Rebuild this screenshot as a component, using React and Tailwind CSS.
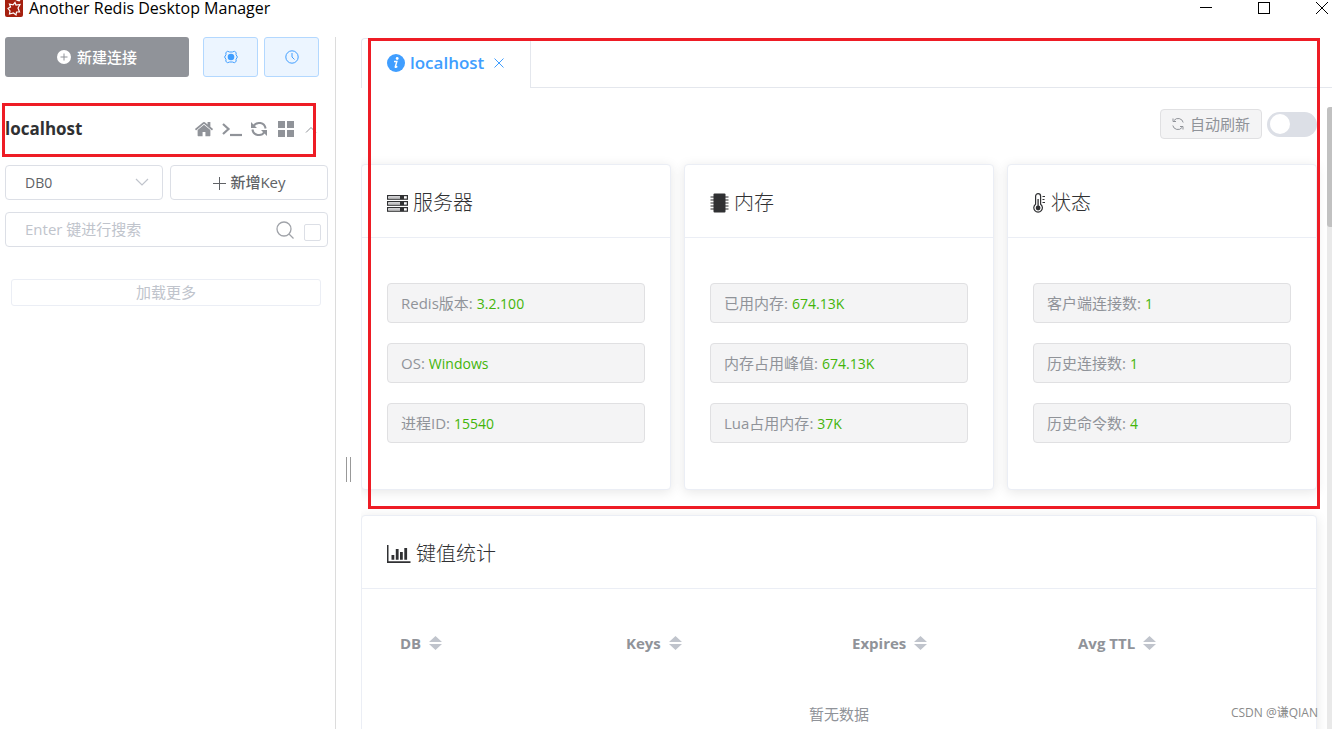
import React, { useState } from 'react';

const cards = [
  {
    title: '服务器',
    icon: ServerIcon,
    items: [
      ['Redis版本', '3.2.100'],
      ['OS', 'Windows'],
      ['进程ID', '15540'],
    ],
  },
  {
    title: '内存',
    icon: ChipIcon,
    items: [
      ['已用内存', '674.13K'],
      ['内存占用峰值', '674.13K'],
      ['Lua占用内存', '37K'],
    ],
  },
  {
    title: '状态',
    icon: ThermometerIcon,
    items: [
      ['客户端连接数', '1'],
      ['历史连接数', '1'],
      ['历史命令数', '4'],
    ],
  },
];

const columns = ['DB', 'Keys', 'Expires', 'Avg TTL'];

function LogoIcon() {
  return (
    <svg width="18" height="17" viewBox="0 0 18 17" aria-hidden="true">
      <path d="M0 0h18v15a2 2 0 0 1-2 2H2a2 2 0 0 1-2-2z" fill="#a5200f" />
      <path
        d="M4.500 4 8 4.800 10 2.500 11 5 15 4.500 13 8 14.500 12 11.500 12 11 15 8.500 13 4.500 14 5 11 3 8.500 5.500 7z"
        fill="none"
        stroke="#fff"
        strokeWidth="1.200"
      />
      <path d="M10.500 0h5l-1 1.500-2-.5z" fill="#fff" />
    </svg>
  );
}

function HomeIcon() {
  return (
    <svg width="18" height="16" viewBox="20 240 1624 1300" fill="currentColor" aria-hidden="true">
      <path d="M1408 992v480q0 26-19 45t-45 19H960v-384H704v384H320q-26 0-45-19t-19-45V992q0-1 .5-3t.5-3l575-474 575 474q1 2 1 6zm223-69l-62 74q-8 9-21 11h-3q-13 0-21-7L832 424l-692 577q-12 8-24 7-13-2-21-11l-62-74q-8-10-7-23.500T37 878l719-599q32-26 76-26t76 26l244 204V288q0-14 9-23t23-9h192q14 0 23 9t9 23v408l219 182q10 8 11 21.500t-7 23.500z" />
    </svg>
  );
}

function TerminalIcon() {
  return (
    <svg width="20" height="16" viewBox="0 0 20 16" fill="none" stroke="currentColor" strokeWidth="2.200" aria-hidden="true">
      <path d="M1 3l5.500 5L1 13" />
      <path d="M8 14h12" />
    </svg>
  );
}

function RefreshIcon() {
  return (
    <svg width="16" height="16" viewBox="0 0 16 16" fill="none" stroke="currentColor" strokeWidth="2" aria-hidden="true">
      <path d="M2.500 5A6.600 6.600 0 0 1 14.600 7.500M13.500 11A6.600 6.600 0 0 1 1.400 8.500" />
      <path d="M0 1v6h6zM16 15V9h-6z" fill="currentColor" stroke="none" />
    </svg>
  );
}

function GridIcon() {
  return (
    <svg width="16" height="16" viewBox="0 0 16 16" fill="currentColor" aria-hidden="true">
      <path d="M0 0h7v7H0zM9 0h7v7H9zM0 9h7v7H0zM9 9h7v7H9z" />
    </svg>
  );
}

function GearIcon() {
  return (
    <svg width="14" height="14" viewBox="0 0 14 14" fill="none" stroke="currentColor" strokeLinejoin="round" aria-hidden="true">
      <path d="M3.600 1.300 5.600 2h2.800l2-.7 1.800 1.300-.2 2L13.400 7 12 9.400l.2 2-1.800 1.300-2-.7H5.600l-2 .7-1.800-1.300.2-2L.6 7 2 4.600l-.2-2z" />
      <circle cx="7" cy="7" r="3.300" fill="currentColor" stroke="none" />
    </svg>
  );
}

function ClockIcon() {
  return (
    <svg width="14" height="14" viewBox="0 0 14 14" fill="none" stroke="currentColor" aria-hidden="true">
      <circle cx="7" cy="7" r="6.200" />
      <path d="M7 3v4l2.500 2.500" />
    </svg>
  );
}

function ServerIcon() {
  return (
    <svg width="21" height="17" viewBox="0 0 21 17" fill="currentColor" aria-hidden="true">
      {[0, 6, 12].map((y) => (
        <g key={y}>
          <rect x="0.600" y={y + 0.600} width="19.800" height="3.600" fill="#fff" stroke="currentColor" strokeWidth="1.200" />
          <rect x="2" y={y + 1.800} width="11" height="1.200" fill="#c4c4c6" />
          <rect x="13" y={y + 0.600} width="4" height="3.600" />
        </g>
      ))}
    </svg>
  );
}

function ChipIcon() {
  return (
    <svg width="19" height="20" viewBox="0 0 19 20" fill="currentColor" aria-hidden="true">
      <rect x="3.500" y="0.500" width="12" height="19" rx="1" />
      <path d="M.5 4h18M.5 7h18M.5 10h18M.5 13h18M.5 16h18" stroke="currentColor" strokeWidth="1.200" />
    </svg>
  );
}

function ThermometerIcon() {
  return (
    <svg width="13" height="20" viewBox="0 0 13 20" fill="none" stroke="currentColor" aria-hidden="true">
      <path d="M2.600 11.300V3.200a2.500 2.500 0 0 1 5 0v8.100a4.300 4.300 0 1 1-5 0z" strokeWidth="1.200" />
      <circle cx="5.100" cy="15" r="2.400" fill="currentColor" stroke="none" />
      <path d="M5.100 6v9" strokeWidth="1.300" />
      <path d="M9.500 3.500h2.500M9.500 6.500h2M9.500 9.500h2.500" />
    </svg>
  );
}

function ChartIcon() {
  return (
    <svg width="24" height="18" viewBox="0 0 24 18" fill="currentColor" aria-hidden="true">
      <path d="M0 0h1.500v16.300H23.500V18H0zM4.500 10h2.800v4.800H4.500zM8.800 4h2.800v10.800H8.800zM13 7h2.800v7.800H13zM17.300 3h2.800v11.800h-2.800z" />
    </svg>
  );
}

function TitleBar() {
  return (
    <header className="flex h-[17px] shrink-0 items-start pl-[5px] pr-1 text-black">
      <LogoIcon />
      <h1 className="ml-[6px] flex-1 whitespace-nowrap text-[16px] leading-4">Another Redis Desktop Manager</h1>
      <div className="flex gap-[46px]">
        <button type="button" aria-label="Minimize">
          <svg width="12" height="15" viewBox="0 0 12 15" stroke="currentColor">
            <path d="M0 7.500h12" />
          </svg>
        </button>
        <button type="button" aria-label="Maximize">
          <svg width="12" height="15" viewBox="0 0 12 15" fill="none" stroke="currentColor">
            <rect x="0.500" y="2.500" width="11" height="11" />
          </svg>
        </button>
        <button type="button" aria-label="Close">
          <svg width="12" height="15" viewBox="0 0 12 15" stroke="currentColor">
            <path d="M0 2l12 12M12 2L0 14" />
          </svg>
        </button>
      </div>
    </header>
  );
}

function Sidebar() {
  const [exact, setExact] = useState(false);

  return (
    <aside className="w-84 shrink-0 border-r border-[#dcdcdc] pl-[5px] pr-[7px]">
      <div className="flex pr-[9px]">
        <button
          type="button"
          className="flex h-10 flex-1 items-center justify-center gap-[6px] rounded-[3px] bg-[#909399] text-[15px] font-medium text-white"
        >
          <svg width="14" height="14" viewBox="0 0 14 14" aria-hidden="true">
            <circle cx="7" cy="7" r="7" fill="#fff" />
            <path d="M7 3.500v7M3.500 7h7" stroke="#909399" />
          </svg>
          新建连接
        </button>
        <button
          type="button"
          aria-label="设置"
          className="ml-[14px] flex h-10 w-[55px] items-center justify-center rounded-[3px] border border-[#b3d8ff] bg-[#ecf5ff] text-[#409eff]"
        >
          <GearIcon />
        </button>
        <button
          type="button"
          aria-label="日志"
          className="ml-[6px] flex h-10 w-[55px] items-center justify-center rounded-[3px] border border-[#b3d8ff] bg-[#ecf5ff] text-[#409eff]"
        >
          <ClockIcon />
        </button>
      </div>

      {/* Connection header */}
      <div className="relative mt-[26px] flex h-[51px] items-center pr-[11px] text-[#909399]">
        <h2 className="flex-1 text-[17px] font-bold text-[#303133]">localhost</h2>
        <div className="flex items-center gap-[9px]">
          <button type="button" aria-label="主页"><HomeIcon /></button>
          <button type="button" aria-label="命令行"><TerminalIcon /></button>
          <button type="button" aria-label="刷新"><RefreshIcon /></button>
          <button type="button" aria-label="菜单" className="mx-[2px]"><GridIcon /></button>
          <button type="button" aria-label="折叠">
            <svg width="12" height="12" viewBox="0 0 12 12" fill="none" stroke="currentColor" aria-hidden="true">
              <path d="M1 9.500l5-5 5 5" />
            </svg>
          </button>
        </div>
        <div className="pointer-events-none absolute -bottom-[3px] -left-[3px] right-3 top-0 border-3 border-[#ee1c25]" />
      </div>

      <div className="mt-[11px] grid grid-cols-2 gap-[7px] text-[15px] text-[#606266]">
        <div className="relative">
          <select
            aria-label="DB"
            className="h-[35px] w-full appearance-none rounded-[4px] border border-[#dcdfe6] bg-white px-[19px] text-[14px]"
          >
            <option>DB0</option>
          </select>
          <svg
            className="pointer-events-none absolute right-[14px] top-[10px] text-[#c0c4cc]"
            width="14"
            height="14"
            viewBox="0 0 14 14"
            fill="none"
            stroke="currentColor"
            strokeWidth="1.200"
            aria-hidden="true"
          >
            <path d="M1 4l6 6 6-6" />
          </svg>
        </div>
        <button
          type="button"
          className="flex h-[35px] items-center justify-center gap-1 rounded-[4px] border border-[#dcdfe6] text-[15px] font-medium"
        >
          <svg width="14" height="14" viewBox="0 0 14 14" stroke="currentColor" aria-hidden="true">
            <path d="M7.500 1v13M1 7.500h13" />
          </svg>
          新增Key
        </button>
      </div>

      <div className="mt-3 flex h-[35px] items-center rounded-[4px] border border-[#dcdfe6] pl-[19px] pr-[6px]">
        <input
          type="text"
          aria-label="搜索"
          placeholder="Enter 键进行搜索"
          className="min-w-0 flex-1 text-[15px] outline-none placeholder:text-[#c0c4cc]"
        />
        <svg className="text-[#a0a3a9]" width="18" height="18" viewBox="0 0 18 18" fill="none" stroke="currentColor" strokeWidth="1.300" aria-hidden="true">
          <circle cx="8" cy="8" r="7" />
          <path d="M13 13l4.500 4.500" />
        </svg>
        <input
          type="checkbox"
          aria-label="精确搜索"
          checked={exact}
          onChange={(e) => setExact(e.target.checked)}
          className="ml-[10px] mt-[5px] size-[17px] appearance-none rounded-[2px] border border-[#dcdfe6] bg-white checked:bg-[#409eff]"
        />
      </div>

      <div className="mt-8 pl-[6px] pr-[7px]">
        <button
          type="button"
          disabled
          className="h-[27px] w-full rounded-[3px] border border-[#ebeef5] text-[15px] leading-[25px] text-[#c0c4cc]"
        >
          加载更多
        </button>
      </div>
    </aside>
  );
}

function TabBar() {
  return (
    <nav className="mt-px flex h-[50px] shrink-0">
      <div className="flex w-[170px] items-center rounded-t-[4px] border-x border-t border-[#e4e7ed] pb-px pl-[25px] text-[#409eff]">
        <a href="#localhost" className="flex items-center gap-[5px] text-[17px] font-semibold leading-6">
          <svg width="18" height="18" viewBox="0 0 18 18" aria-hidden="true">
            <circle cx="9" cy="9" r="9" fill="currentColor" />
            <circle cx="10.200" cy="4.500" r="1.400" fill="#fff" />
            <path d="M7 7.600h2.800L8.300 12.800q-.2 1.200 2-.4" fill="none" stroke="#fff" strokeWidth="1.500" />
          </svg>
          localhost
        </a>
        <button type="button" aria-label="关闭" className="ml-[10px]">
          <svg width="10" height="10" viewBox="0 0 10 10" stroke="currentColor" aria-hidden="true">
            <path d="M.5.5l9 9M9.500.5l-9 9" />
          </svg>
        </button>
      </div>
      <div className="flex-1 border-b border-[#e4e7ed]" />
    </nav>
  );
}

function InfoCard({ title, icon: Icon, items }) {
  return (
    <section className="rounded-[4px] border border-[#ebeef5] bg-white shadow-[0_2px_12px_rgba(0,0,0,0.1)]">
      <h3 className="flex h-[73px] items-center gap-[5px] border-b border-[#ebeef5] px-[25px] pt-1 text-[20px] font-light text-[#303133]">
        <Icon />
        {title}
      </h3>
      <ul className="space-y-5 px-[25px] pb-[46px] pt-[45px]">
        {items.map(([label, value]) => (
          <li
            key={label}
            className="flex h-10 items-center gap-1 rounded-[4px] border border-[#e0e0e2] bg-[#f4f4f5] px-[13px] text-[15px] text-[#909399]"
          >
            {label}:
            <span className="text-[14px] text-[#43b50a]">{value}</span>
          </li>
        ))}
      </ul>
    </section>
  );
}

function KeyStats() {
  return (
    <section className="mt-[25px] rounded-[4px] border border-[#ebeef5] bg-white shadow-[0_2px_12px_rgba(0,0,0,0.1)]">
      <h3 className="flex h-[73px] items-center gap-[5px] border-b border-[#ebeef5] px-[25px] pt-1 text-[20px] font-light text-[#303133]">
        <ChartIcon />
        键值统计
      </h3>
      <div className="px-[25px] py-[25px]">
        <table className="w-full table-fixed text-[15px] text-[#909399]">
          <thead>
            <tr>
              {columns.map((name) => (
                <th key={name} className="h-[58px] px-[13px] text-left font-bold">
                  <button type="button" className="flex items-center gap-2">
                    {name}
                    <svg className="text-[#c0c4cc]" width="13" height="14" viewBox="0 0 13 14" fill="currentColor" aria-hidden="true">
                      <path d="M6.500 0l6.500 6H0zM6.500 14l6.500-6H0z" />
                    </svg>
                  </button>
                </th>
              ))}
            </tr>
          </thead>
          <tbody>
            <tr>
              <td colSpan={4} className="h-[84px] text-center">
                暂无数据
              </td>
            </tr>
          </tbody>
        </table>
      </div>
    </section>
  );
}

export default function App() {
  const [autoRefresh, setAutoRefresh] = useState(false);

  return (
    <div className="relative flex h-screen flex-col overflow-hidden bg-white font-['Open_Sans','Noto_Sans_CJK_SC',sans-serif]">
      <TitleBar />
      <div className="mt-5 flex min-h-0 flex-1">
        <Sidebar />

        {/* Drag handle between the panes */}
        <div className="flex w-[25px] shrink-0 gap-[3px] pl-[10px] pt-[420px]">
          <span className="h-[25px] w-px bg-[#999]" />
          <span className="h-[25px] w-px bg-[#999]" />
        </div>

        <main className="relative flex min-w-0 flex-1 flex-col">
          <TabBar />
          <div className="flex min-h-0 flex-1 pt-[19px]">
            <div className="min-w-0 flex-1 overflow-hidden pr-[10px] pt-[2px]">
              <div className="flex items-center justify-end gap-[5px]">
                <span className="flex h-[30px] items-center gap-[6px] rounded-[4px] border border-[#e0e0e2] bg-[#f4f4f5] px-[11px] text-[15px] text-[#909399]">
                  <svg width="12" height="12" viewBox="0 0 12 12" fill="none" stroke="currentColor" aria-hidden="true">
                    <path d="M.8 7.500A5.200 5.200 0 0 0 10 9.500M11.200 4.500A5.200 5.200 0 0 0 2 2.500" />
                    <path d="M1 .5v3h3M11 11.500v-3H8" />
                  </svg>
                  自动刷新
                </span>
                <label className="relative h-[25px] w-[50px]">
                  <input
                    type="checkbox"
                    role="switch"
                    aria-label="自动刷新"
                    checked={autoRefresh}
                    onChange={(e) => setAutoRefresh(e.target.checked)}
                    className="peer block h-[25px] w-[50px] appearance-none rounded-full bg-[#dcdfe6] checked:bg-[#409eff]"
                  />
                  <span className="pointer-events-none absolute left-[3px] top-[2px] size-5 rounded-full bg-white peer-checked:left-[27px]" />
                </label>
              </div>

              <div className="mt-[25px] grid grid-cols-3 gap-[13px]">
                {cards.map((card) => (
                  <InfoCard key={card.title} {...card} />
                ))}
              </div>
              <KeyStats />
            </div>

            {/* Scrollbar */}
            <div className="w-[5px] shrink-0 rounded-tl-[3px] bg-[#e9e9e9]">
              <div className="h-[120px] rounded-l-[3px] bg-[#c1c1c1]" />
            </div>
          </div>
          <div className="pointer-events-none absolute left-[7px] right-3 top-px h-[471px] border-3 border-[#ee1c25]" />
        </main>
      </div>
      <p className="absolute bottom-2 right-[14px] text-[12px] leading-4 text-[#8a8a8a]">CSDN @谦QIAN</p>
    </div>
  );
}
